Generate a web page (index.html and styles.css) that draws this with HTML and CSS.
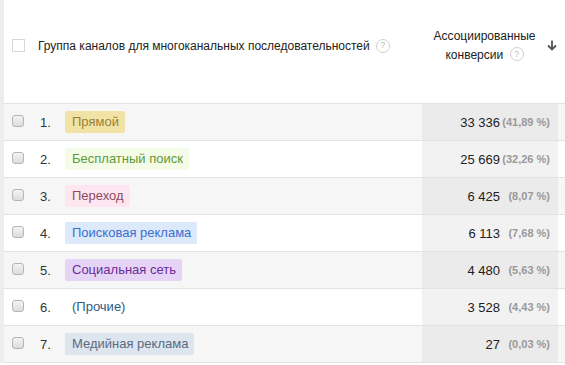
FILE: index.html
```html
<!DOCTYPE html>
<html lang="ru">
<head>
<meta charset="utf-8">
<link rel="stylesheet" href="styles.css">
</head>
<body>
<div class="wrap">
  <div class="head">
    <div class="hcheck"><span class="hbox"></span></div>
    <div class="htitle">Группа каналов для многоканальных последовательностей <span class="help">?</span></div>
    <div class="hval">
      <div class="hvtext">Ассоциированные<br>конверсии <span class="help">?</span></div>
      <svg class="arrow" width="10" height="11" viewBox="0 0 10 11"><path d="M5 0.5V9.5M1 5.5L5 9.5L9 5.5" fill="none" stroke="#555" stroke-width="1.8"/></svg>
    </div>
  </div>
  <div class="row odd">
    <div class="c"><span class="box"></span></div><div class="n">1.</div>
    <div class="l"><span class="chip direct">Прямой</span></div>
    <div class="v"><span class="num">33 336</span><span class="pct">(41,89 %)</span></div><div class="t"></div>
  </div>
  <div class="row">
    <div class="c"><span class="box"></span></div><div class="n">2.</div>
    <div class="l"><span class="chip organic">Бесплатный поиск</span></div>
    <div class="v"><span class="num">25 669</span><span class="pct">(32,26 %)</span></div><div class="t"></div>
  </div>
  <div class="row odd">
    <div class="c"><span class="box"></span></div><div class="n">3.</div>
    <div class="l"><span class="chip referral">Переход</span></div>
    <div class="v"><span class="num">6 425</span><span class="pct">(8,07 %)</span></div><div class="t"></div>
  </div>
  <div class="row">
    <div class="c"><span class="box"></span></div><div class="n">4.</div>
    <div class="l"><span class="chip paid">Поисковая реклама</span></div>
    <div class="v"><span class="num">6 113</span><span class="pct">(7,68 %)</span></div><div class="t"></div>
  </div>
  <div class="row odd">
    <div class="c"><span class="box"></span></div><div class="n">5.</div>
    <div class="l"><span class="chip social">Социальная сеть</span></div>
    <div class="v"><span class="num">4 480</span><span class="pct">(5,63 %)</span></div><div class="t"></div>
  </div>
  <div class="row">
    <div class="c"><span class="box"></span></div><div class="n">6.</div>
    <div class="l"><span class="chip other">(Прочие)</span></div>
    <div class="v"><span class="num">3 528</span><span class="pct">(4,43 %)</span></div><div class="t"></div>
  </div>
  <div class="row odd">
    <div class="c"><span class="box"></span></div><div class="n">7.</div>
    <div class="l"><span class="chip display">Медийная реклама</span></div>
    <div class="v"><span class="num">27</span><span class="pct">(0,03 %)</span></div><div class="t"></div>
  </div>
</div>
</body>
</html>
```
FILE: styles.css
```css
html, body {
  margin: 0;
  padding: 0;
  background: #ffffff;
}
body {
  font-family: "Liberation Sans", Arial, sans-serif;
  color: #222;
}
.wrap {
  width: 561px;
  border-left: 4px solid #ededed;
}
.head {
  display: grid;
  grid-template-columns: 34px 384px 139px;
  height: 103px;
  border-bottom: 1px solid #e3e3e3;
  align-items: center;
}
.head > div {
  margin-bottom: 12px;
}
.hcheck {
  padding-left: 8px;
  display: flex;
}
.hbox {
  width: 11px;
  height: 11px;
  border: 1px solid #d8d8d8;
  background: #fff;
}
.htitle {
  font-size: 12px;
  color: #222;
  display: flex;
  align-items: center;
  gap: 6px;
}
.help {
  display: inline-flex;
  align-items: center;
  justify-content: center;
  width: 12px;
  height: 12px;
  border: 1px solid #d0d0d0;
  border-radius: 50%;
  font-size: 9px;
  color: #bbb;
  line-height: 1;
  vertical-align: middle;
}
.hval {
  display: flex;
  align-items: center;
}
.hvtext {
  width: 125px;
  text-align: center;
  font-size: 12px;
  line-height: 19px;
  color: #222;
}
.hvtext .help {
  margin-left: 3px;
  position: relative;
  top: -1px;
}
.row {
  display: grid;
  grid-template-columns: 36px 25px 1fr 136px 7px;
  height: 36px;
  border-bottom: 1px solid #e2e2e2;
  background: #fff;
}
.row.odd {
  background: #f6f6f6;
}
.row > div {
  display: flex;
  align-items: center;
}
.c {
  padding-left: 8px;
}
.box {
  width: 10px;
  height: 10px;
  border: 1px solid #b5b5b5;
  border-radius: 3px;
  background: linear-gradient(#f4f4f4, #dcdcdc);
  margin-top: -3px;
}
.n {
  font-size: 13px;
  color: #333;
}
.chip {
  font-size: 13px;
  line-height: 22px;
  padding: 0 6px 0 7px;
  border-radius: 2px;
}
.direct { background: #f1e3a6; color: #9c7f33; }
.organic { background: #f4fce8; color: #5d9a3a; }
.referral { background: #fde6ef; color: #8e4b60; }
.paid { background: #dbe9fb; color: #3d6fcd; }
.social { background: #e6d4f6; color: #6a2c98; }
.other { background: transparent; color: #2e5a85; }
.display { background: #dde5ef; color: #5c6a7e; }
.v {
  justify-content: flex-end;
  padding-right: 8px;
  background: #f2f2f2;
}
.row.odd .v {
  background: #ebebeb;
}
.num {
  font-size: 13px;
  color: #222;
}
.pct {
  width: 50px;
  text-align: right;
  font-size: 11px;
  font-weight: bold;
  color: #999;
}
```
